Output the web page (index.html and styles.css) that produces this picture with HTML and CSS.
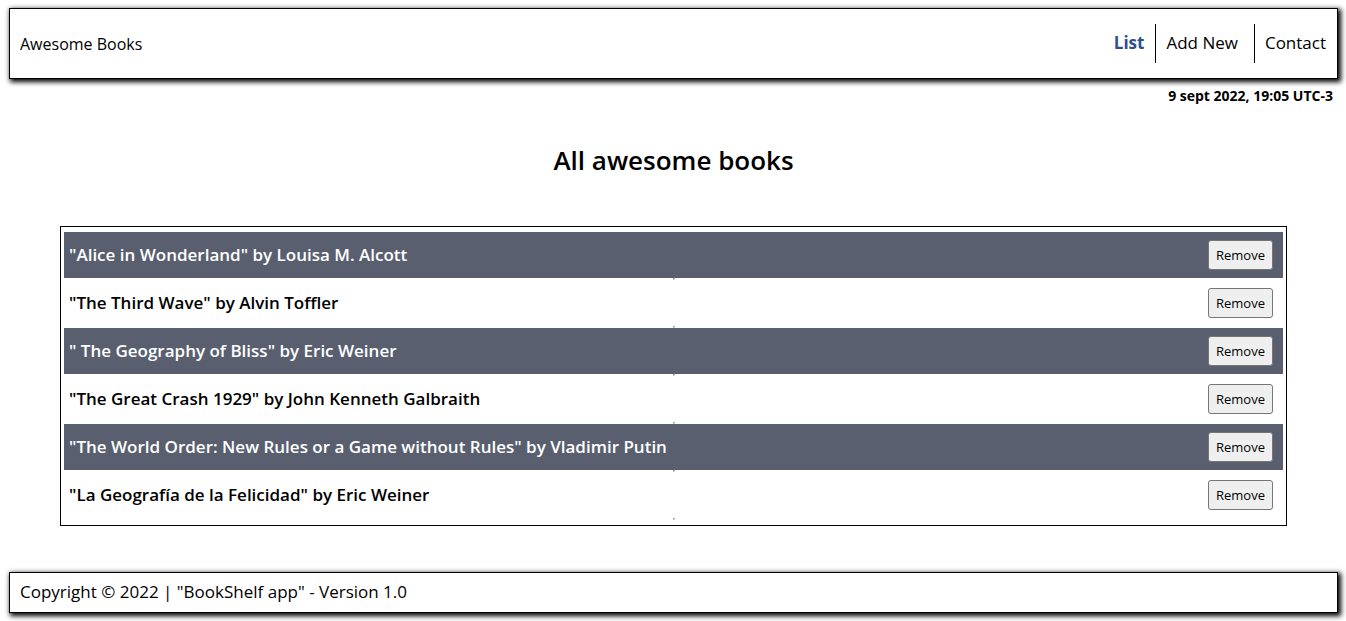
FILE: index.html
```html
<!DOCTYPE html>
<html lang="en">
<head>
<meta charset="utf-8">
<title>Awesome Books</title>
<link rel="stylesheet" href="styles.css">
</head>
<body>
<div class="page">
<header class="site-header">
  <a class="brand" href="#">Awesome Books</a>
  <nav class="menu">
    <a class="menu-link active" href="#list">List</a>
    <a class="menu-link" href="#add">Add New</a>
    <a class="menu-link" href="#contact">Contact</a>
  </nav>
</header>
<main class="content">
  <p class="date">9 sept 2022, 19:05 UTC-3</p>
  <h1 class="title">All awesome books</h1>
  <section class="books" id="list">
    <div class="book"><span class="book-name">"Alice in Wonderland" by Louisa M. Alcott</span><button class="remove" type="button">Remove</button></div>
    <hr class="divider">
    <div class="book"><span class="book-name">"The Third Wave" by Alvin Toffler</span><button class="remove" type="button">Remove</button></div>
    <hr class="divider">
    <div class="book"><span class="book-name">" The Geography of Bliss" by Eric Weiner</span><button class="remove" type="button">Remove</button></div>
    <hr class="divider">
    <div class="book"><span class="book-name">"The Great Crash 1929" by John Kenneth Galbraith</span><button class="remove" type="button">Remove</button></div>
    <hr class="divider">
    <div class="book"><span class="book-name">"The World Order: New Rules or a Game without Rules" by Vladimir Putin</span><button class="remove" type="button">Remove</button></div>
    <hr class="divider">
    <div class="book"><span class="book-name">"La Geografía de la Felicidad" by Eric Weiner</span><button class="remove" type="button">Remove</button></div>
    <hr class="divider">
  </section>
</main>
<footer class="site-footer">Copyright © 2022 | "BookShelf app" - Version 1.0</footer>
</div>
</body>
</html>
```
FILE: styles.css
```css
* {
  box-sizing: border-box;
}

body {
  margin: 0;
  background: #fff;
  color: #000;
  font: 17px/24px "Open Sans", "Noto Sans", sans-serif;
}

.page {
  padding: 8px 8px 8px 9px;
}

a {
  color: inherit;
  text-decoration: none;
}

.site-header,
.site-footer {
  border: 1px solid #000;
  background: #fff;
  box-shadow: 2px 2px 5px 1px #000;
}

.site-header {
  display: flex;
  align-items: center;
  justify-content: space-between;
  padding: 15px 0 15px 10px;
}

.brand {
  font-size: 16px;
}

.menu {
  display: flex;
}

.menu-link {
  padding: 7px 11px 8px 10px;
}

.menu-link + .menu-link {
  border-left: 1px solid #000;
}

.menu-link:nth-child(2) {
  padding-right: 16px;
}

.active {
  color: #2f4f8f;
  font-weight: 700;
}

.date {
  margin: 7px 5px 0 0;
  font-size: 14px;
  font-weight: 700;
  line-height: 20px;
  text-align: right;
}

.title {
  margin: 36px 0 48px;
  font-size: 26px;
  font-weight: 600;
  line-height: 36px;
  text-align: center;
}

.books {
  margin: 0 51px;
  padding: 5px 3px;
  border: 1px solid #000;
}

.book {
  display: flex;
  align-items: center;
  justify-content: space-between;
  padding: 8px 10px 8px 5px;
  font-weight: 600;
}

.book:nth-of-type(odd) {
  background: #595f6f;
  color: #fff;
}

.divider {
  width: 2px;
  margin: 0 auto;
  border: 1px solid;
  border-color: #9a9a9a #ddd #ddd #9a9a9a;
}

.remove {
  height: 30px;
  padding: 0 7px;
  border: 1px solid #767676;
  border-radius: 3px;
  background: #efefef;
  color: #000;
  font: 13px/20px "Open Sans", "Noto Sans", sans-serif;
}

.site-footer {
  margin-top: 46px;
  padding: 7px 10px 8px;
}
```
